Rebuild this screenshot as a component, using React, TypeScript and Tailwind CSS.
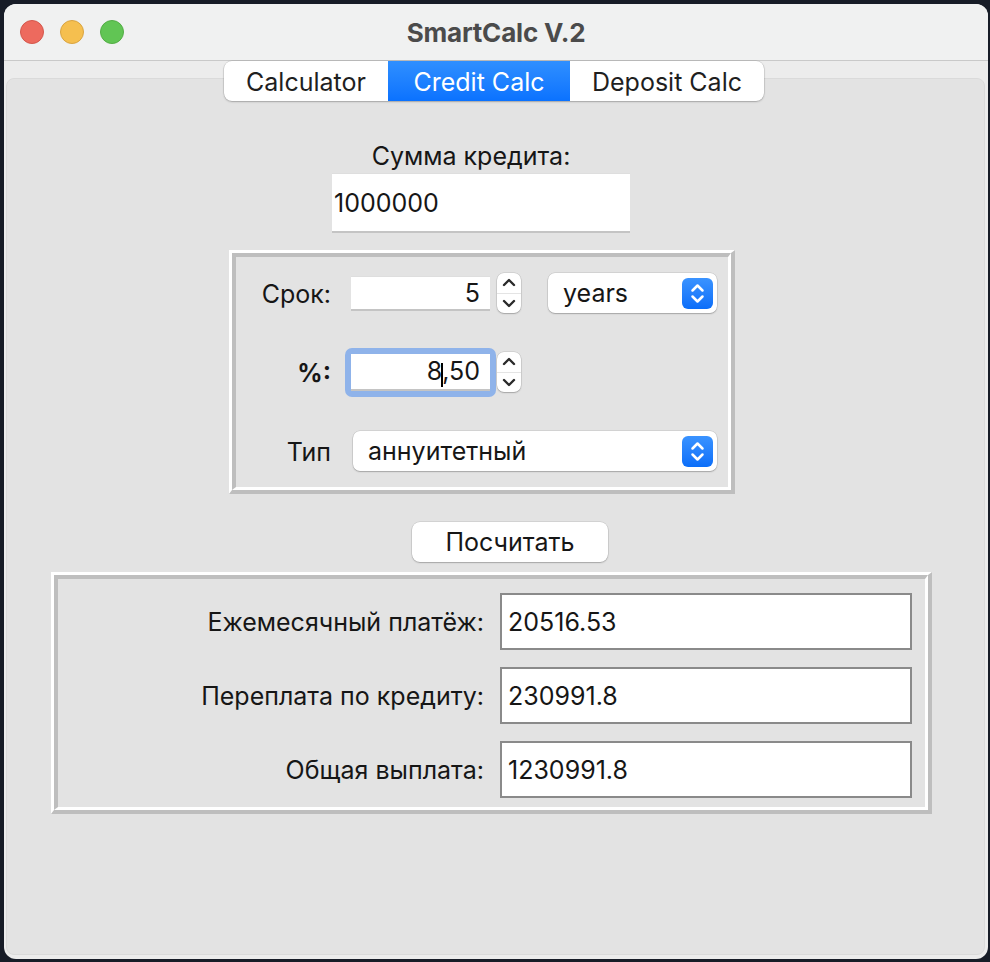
import React from "react";

const Chevrons = ({ color }: { color: string }) => (
    <svg width="31" height="31" viewBox="0 0 31 31" fill="none">
        <path d="M10.5 12.5L15.5 7.5L20.5 12.5" stroke={color} strokeWidth="2.5" strokeLinecap="round" strokeLinejoin="round" />
        <path d="M10.5 18.5L15.5 23.5L20.5 18.5" stroke={color} strokeWidth="2.5" strokeLinecap="round" strokeLinejoin="round" />
    </svg>
);

const Stepper = () => (
    <div className="flex h-[40px] w-[24px] flex-col rounded-[7px] bg-white shadow-[0_0_0_0.5px_rgba(0,0,0,0.14),0_1px_1.5px_rgba(0,0,0,0.22)]">
        <div className="flex flex-1 items-center justify-center border-b border-[#e4e4e4]">
            <svg width="14" height="9" viewBox="0 0 14 9" fill="none">
                <path d="M2 7L7 2L12 7" stroke="#2a2a2a" strokeWidth="2.4" strokeLinecap="round" strokeLinejoin="round" />
            </svg>
        </div>
        <div className="flex flex-1 items-center justify-center">
            <svg width="14" height="9" viewBox="0 0 14 9" fill="none">
                <path d="M2 2L7 7L12 2" stroke="#2a2a2a" strokeWidth="2.4" strokeLinecap="round" strokeLinejoin="round" />
            </svg>
        </div>
    </div>
);

const Select = ({ value, className }: { value: string; className: string }) => (
    <div className={`flex h-[40px] items-center justify-between rounded-[7px] bg-white pl-[15px] pr-[4px] shadow-[0_0_0_0.5px_rgba(0,0,0,0.14),0_1px_1.5px_rgba(0,0,0,0.22)] ${className}`}>
        <span className="translate-y-[1px]">{value}</span>
        <div className="flex h-[31px] w-[31px] items-center justify-center rounded-[6px] bg-linear-to-b from-[#3a93ff] to-[#0a6ef9]">
            <Chevrons color="#ffffff" />
        </div>
    </div>
);

const RaisedBox = ({ className, innerClassName, children }: { className: string; innerClassName: string; children: React.ReactNode }) => (
    <div className={`border-t-[3px] border-l-[3px] border-r-[4px] border-b-[4px] border-t-white border-l-white border-r-[#bebebe] border-b-[#bebebe] ${className}`}>
        <div className={`h-full border-t-[4px] border-l-[4px] border-r-[3px] border-b-[3px] border-t-[#bebebe] border-l-[#bebebe] border-r-white border-b-white ${innerClassName}`}>
            {children}
        </div>
    </div>
);

const ResultRow = ({ label, value }: { label: string; value: string }) => (
    <div className="flex items-center">
        <div className="w-[426px] translate-y-[1px] text-right">{label}</div>
        <div className="ml-[16px] flex h-[57px] w-[412px] items-center border-2 border-[#8a8a8a] bg-white pl-[6px] pt-[2px]">{value}</div>
    </div>
);

const App: React.FC = () => {
    return (
        <div className="h-[962px] w-[990px] bg-[#171c27] pl-[4px] pt-[4px] font-['Inter','Liberation_Sans',sans-serif] text-[#161616]">
            <div className="flex h-[955px] w-[984px] flex-col overflow-hidden rounded-[12px] bg-[#ececec]">
                {/* title bar */}
                <div className="grid h-[57px] shrink-0 grid-cols-[1fr_auto_1fr] items-center border-b border-[#c9c9c9] bg-[#f0f1f1]">
                    <div className="flex items-center gap-[16px] pl-[16px]">
                        <div className="h-[24px] w-[24px] rounded-full border border-[#d4574c] bg-[#ed6a5e]" />
                        <div className="h-[24px] w-[24px] rounded-full border border-[#d9a441] bg-[#f5bf4f]" />
                        <div className="h-[24px] w-[24px] rounded-full border border-[#53ad45] bg-[#61c554]" />
                    </div>
                    <div className="text-[26px] font-bold tracking-[-0.2px] text-[#4b4b4b]">SmartCalc V.2</div>
                    <div />
                </div>

                <div className="flex flex-1 flex-col pl-[2px] pr-[3px] pt-[17px] pb-[4px]">
                    <div className="flex flex-1 flex-col items-start rounded-[8px] border border-[#dadada] bg-[#e3e3e3] text-[25px]">
                        {/* tabs */}
                        <div className="-mt-[18px] ml-[217px] flex h-[40px] w-[540px] overflow-hidden rounded-[8px] bg-white text-[#1f1f1f] shadow-[0_0_0_0.5px_rgba(0,0,0,0.14),0_1px_2px_rgba(0,0,0,0.22)]">
                            <div className="flex w-[164px] items-center justify-center pt-[3px]">Calculator</div>
                            <div className="flex w-[182px] items-center justify-center bg-linear-to-b from-[#2f8fff] to-[#0a72ff] pt-[3px] text-white">Credit Calc</div>
                            <div className="flex flex-1 items-center justify-center pt-[3px]">Deposit Calc</div>
                        </div>

                        <div className="ml-[314px] mt-[39px] w-[300px] text-center leading-[32px]">Сумма кредита:</div>
                        <div className="ml-[325px] mt-[1px] flex h-[60px] w-[298px] items-center border-t border-b-2 border-t-[#dedede] border-b-[#c4c4c4] bg-white pl-[2px] pt-[3px]">1000000</div>

                        {/* term box */}
                        <RaisedBox className="ml-[222px] mt-[17px] h-[244px] w-[506px]" innerClassName="flex flex-col gap-[34px] pt-[16px]">
                            <div className="flex items-center">
                                <div className="w-[95px] translate-y-[2px] text-right">Срок:</div>
                                <div className="ml-[20px] flex h-[35px] w-[139px] items-center justify-end border-t border-b-2 border-t-[#dedede] border-b-[#c4c4c4] bg-white pr-[10px] pt-[2px]">5</div>
                                <div className="ml-[7px]"><Stepper /></div>
                                <Select value="years" className="ml-[27px] w-[169px]" />
                            </div>
                            <div className="flex h-[50px] items-center">
                                <div className="w-[95px] translate-y-[2px] text-right font-bold">%:</div>
                                <div className="ml-[14px] rounded-[7px] bg-[#8fb3ea] p-[6px]">
                                    <div className="flex h-[37px] w-[139px] items-center justify-end border-b-2 border-b-[#c4c4c4] bg-white pr-[10px] pt-[2px]">
                                        8<span className="-mx-[1px] inline-block h-[24px] w-[2px] translate-y-[3px] bg-black" />,50
                                    </div>
                                </div>
                                <div className="ml-[1px]"><Stepper /></div>
                            </div>
                            <div className="flex items-center">
                                <div className="w-[95px] translate-y-[2px] text-right">Тип</div>
                                <Select value="аннуитетный" className="ml-[22px] w-[364px]" />
                            </div>
                        </RaisedBox>

                        <div className="ml-[405px] mt-[28px] flex h-[40px] w-[196px] items-center justify-center rounded-[8px] bg-white pt-[2px] shadow-[0_0_0_0.5px_rgba(0,0,0,0.14),0_1px_1.5px_rgba(0,0,0,0.22)]">Посчитать</div>

                        {/* results box */}
                        <RaisedBox className="ml-[44px] mt-[10px] h-[242px] w-[881px]" innerClassName="flex flex-col gap-[17px] pt-[14px]">
                            <ResultRow label="Ежемесячный платёж:" value="20516.53" />
                            <ResultRow label="Переплата по кредиту:" value="230991.8" />
                            <ResultRow label="Общая выплата:" value="1230991.8" />
                        </RaisedBox>
                    </div>
                </div>
            </div>
        </div>
    );
};

export default App;
